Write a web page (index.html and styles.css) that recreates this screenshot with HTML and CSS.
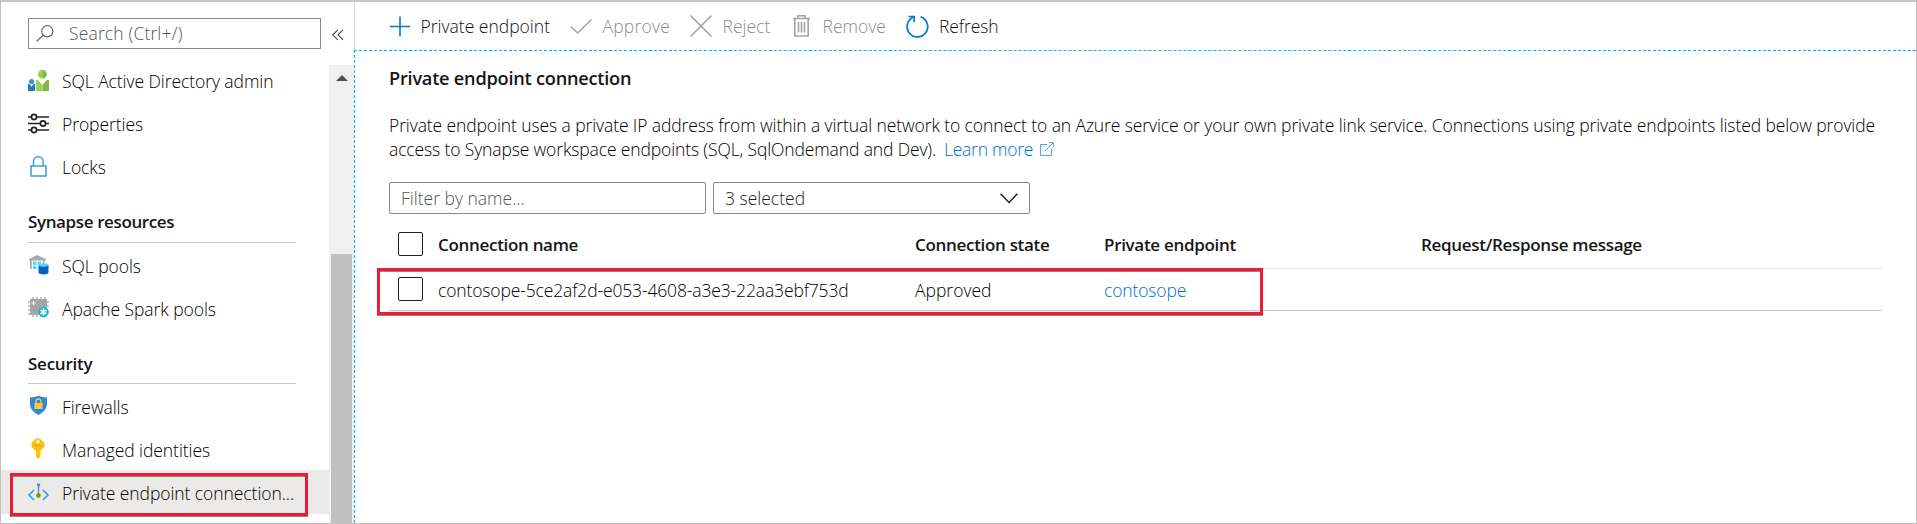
FILE: index.html
```html
<!DOCTYPE html>
<html lang="en">
<head>
<meta charset="utf-8">
<title>Private endpoint connections</title>
<link rel="stylesheet" href="styles.css">
</head>
<body>
<div class="portal">
  <aside class="sidebar">
    <div class="search-row">
      <div class="search">
        <svg class="search-icon" width="18" height="17" viewBox="0 0 18 17"><circle cx="11.3" cy="6.3" r="5.6"/><path d="M7.3 10.3L.6 16.2"/></svg>
        <span class="t t-search">Search (Ctrl+/)</span>
      </div>
      <svg class="collapse" width="12" height="12" viewBox="0 0 12 12"><path d="M5.8.8L.8 5.8l5 5M11 .8L6 5.8l5 5"/></svg>
    </div>
    <div class="nav-area">
      <nav class="nav">
        <a class="item"><svg class="icon" viewBox="0 0 21 21"><path fill="#2a76bd" d="M0 14h1.5l2 2.500 2-2.500H7v7H0z"/><circle cx="3.600" cy="11.500" r="2.600" fill="#3a8fd6"/><path fill="#fff" d="M2.300 14h2.600L3.600 17z"/><path fill="#9bd05c" d="M8 10h2l4.500 5V21H8z"/><path fill="#7fba42" d="M21 10h-2l-4.500 5V21H21z"/><circle cx="14.500" cy="4.300" r="4.300" fill="#7fba42"/><path fill="#9bd05c" d="M14.500 0a4.300 4.300 0 0 0 0 8.600z"/></svg><span class="t">SQL Active Directory admin</span></a>
        <a class="item"><svg class="icon line-dark" viewBox="0 0 21 21"><path d="M0 4h3M9 4h12M0 10.500h12M18 10.500h3M0 17h3M9 17h12"/><circle cx="6" cy="4" r="2.600"/><circle cx="15" cy="10.500" r="2.600"/><circle cx="6" cy="17" r="2.600"/></svg><span class="t">Properties</span></a>
        <a class="item"><svg class="icon line-blue" viewBox="0 0 21 21"><path d="M3 10h15v10H3zM5.500 10V5.500a4.800 4.800 0 0 1 9.600 0V10"/></svg><span class="t t-locks">Locks</span></a>
        <h2 class="group group-first"><span class="t t-syn">Synapse resources</span></h2>
        <a class="item"><svg class="icon icon-up" viewBox="0 0 21 21"><path fill="#a9a9a9" d="M9 1l9 4v1.500H1V5zM2 6h1.800v9H2zM15 6h1.500v4H15z"/><path fill="#50d8f5" d="M5 7.500h3.500V11H5zM9.500 7.500H13V11H9.500zM5 12h3.500v3H5z"/><path fill="#0063b8" d="M10.500 11h10v7.500c0 2.600-10 2.600-10 0z"/><ellipse cx="15.500" cy="11" rx="5" ry="1.700" fill="#50d8f5"/></svg><span class="t">SQL pools</span></a>
        <a class="item"><svg class="icon icon-up" viewBox="0 0 21 21"><path stroke="#b5b5b5" stroke-width="1.500" d="M5 0v20M9 0v20M13 0v20M17 0v12M0 5h21M0 9h21M0 13h12M0 17h12"/><rect x="2" y="2" width="17" height="16" rx="1" fill="#a5a5a5"/><path stroke="#fff" d="M5.500 4v4M3.500 6h4"/><circle cx="15.500" cy="15" r="5.300" fill="#20b4dd"/><path stroke="#fff" stroke-width="1.500" d="M15.500 11.500v7M12.500 13.200l6 3.600M18.500 13.200l-6 3.600"/></svg><span class="t">Apache Spark pools</span></a>
        <h2 class="group"><span class="t t-sec">Security</span></h2>
        <a class="item"><svg class="icon icon-up" viewBox="0 0 21 21"><path fill="#2f86e0" d="M10.500.500C13 2.500 16 2 19 2.500V9c0 5-4 8.500-8.500 11C6 17.500 2 14 2 9V2.500c3-.500 6 0 8.500-2z"/><path fill="#ffca2c" d="M6.500 8h8v6h-8z"/><path fill="none" stroke="#ffca2c" stroke-width="1.300" d="M8 8V6.500a2.500 2.500 0 0 1 5 0V8"/></svg><span class="t t-fire">Firewalls</span></a>
        <a class="item"><svg class="icon icon-up" viewBox="0 0 21 21"><path fill="#ffc20e" fill-rule="evenodd" d="M10 0l3 1.200L16.500 5v4L12.500 13v6L10 20.500 8 19v-6L3.500 9V5L7 1.200zM10 2a1.600 1.600 0 1 0 .010 0z"/><path stroke="#f39b13" stroke-width="1.200" d="M6.500 7.500h7"/></svg><span class="t">Managed identities</span></a>
        <a class="item selected"><svg class="icon" viewBox="0 0 21 21"><path fill="none" stroke="#3b9fd0" stroke-width="1.700" d="M6 7l-5 5 5 5M15 7l5 5-5 5"/><path stroke="#6b7f8c" stroke-width="1.300" d="M10.500 2v10"/><circle cx="10.500" cy="2" r="1.800" fill="#3b9fd0"/><circle cx="10.500" cy="12.500" r="2.300" fill="#57a300"/></svg><span class="t">Private endpoint connection...</span></a>
      </nav>
      <div class="scrollbar"><span class="arrow"></span><span class="thumb"></span></div>
    </div>
    <span class="mark mark-nav"></span>
  </aside>
  <main class="main">
    <div class="toolbar">
      <a class="cmd c1"><svg width="20" height="21" viewBox="0 0 20 21"><path stroke="#0078d4" stroke-width="1.600" d="M0 10.500h20M10 .500v20"/></svg><span class="t">Private endpoint</span></a>
      <a class="cmd c2 off"><svg width="22" height="21" viewBox="0 0 22 21"><path d="M.700 10.500l7 6.500L21.500 3.500"/></svg><span class="t t-app">Approve</span></a>
      <a class="cmd c3 off"><svg width="22" height="22" viewBox="0 0 22 22"><path d="M.500.500l21 21M21.500.500l-21 21"/></svg><span class="t">Reject</span></a>
      <a class="cmd c4 off"><svg width="17" height="22" viewBox="0 0 17 22"><path d="M0 3.500h17M5 3V.800h7V3M1.800 4v17h13.400V4M5.500 7v10.500M8.500 7v10.500M11.500 7v10.500"/></svg><span class="t">Remove</span></a>
      <a class="cmd c5"><svg width="23" height="23" viewBox="0 0 23 23"><path fill="none" stroke="#0078d4" stroke-width="1.700" d="M14.500 1.800A10.300 10.300 0 1 1 7.700 2M2.500 1.500h5.700v5.700"/></svg><span class="t t-ref">Refresh</span></a>
    </div>
    <section class="content">
      <h1 class="title"><span class="t t-title">Private endpoint connection</span></h1>
      <div class="para">
        <div class="para-line"><span class="t t-p1">Private endpoint uses a private IP address from within a virtual network to connect to an Azure service or your own private link service. Connections using private endpoints listed below provide</span></div>
        <div class="para-line"><span class="t t-p2">access to Synapse workspace endpoints (SQL, SqlOndemand and Dev).</span><a class="link more"><span class="t t-more">Learn more</span><svg width="14" height="14" viewBox="0 0 14 14"><path d="M7 2.500H.600v10.900h10.900V7M4.500 9.500l9-9M9 .600h4.400V5"/></svg></a></div>
      </div>
      <div class="filters">
        <div class="field"><span class="t t-filter">Filter by name...</span></div>
        <div class="field select"><span class="t t-3sel">3 selected</span><svg width="18" height="11" viewBox="0 0 18 11"><path d="M.600.800L9 9.500 17.400.800"/></svg></div>
      </div>
      <div class="table">
        <div class="row head"><span class="box"></span><span class="t">Connection name</span><span class="t">Connection state</span><span class="t">Private endpoint</span><span class="t">Request/Response message</span></div>
        <div class="row data"><span class="box"></span><span class="t t-id">contosope-5ce2af2d-e053-4608-a3e3-22aa3ebf753d</span><span class="t t-appd">Approved</span><a class="t t-cont link">contosope</a><span class="mark mark-row"></span></div>
      </div>
    </section>
  </main>
</div>
</body>
</html>
```
FILE: styles.css
```css
* { box-sizing: border-box; }
body { margin: 0; font-family: "Open Sans", "Noto Sans", sans-serif; font-size: 17.5px; font-weight: 300; color: #000; background: #fff; }
h1, h2 { margin: 0; font-weight: 600; font-size: 17px; letter-spacing: -0.38px; color: #161616; }
.portal { display: flex; width: 1917px; height: 524px; overflow: hidden; border: 1px solid #c0c0c0; border-top: 2px solid #c8c8c8; }
.t { white-space: nowrap; }
.icon { width: 21px; height: 21px; flex: none; overflow: visible; }
.icon-up { margin-bottom: 2px; }
.line-dark { fill: none; stroke: #222; stroke-width: 1.7; }
.line-blue { fill: none; stroke: #3b9fd0; stroke-width: 1.5; }

/* Sidebar */
.sidebar { position: relative; width: 353px; flex: none; display: flex; flex-direction: column; }
.search-row { display: flex; align-items: center; gap: 11px; height: 31px; margin: 16px 0 0 27px; }
.search { display: flex; align-items: center; gap: 15px; width: 293px; height: 31px; padding: 0 0 1px 7px; border: 1px solid #8a8886; color: #555; letter-spacing: 0.15px; }
.search-icon { fill: none; stroke: #666; stroke-width: 1.2; }
.collapse { fill: none; stroke: #444; stroke-width: 1.1; margin-top: 3px; }
.nav-area { display: flex; flex: 1; min-height: 0; margin-top: 16px; }
.nav { width: 328px; padding-top: 1px; margin-top: -7px; }
.item { display: flex; align-items: center; gap: 13px; height: 43px; padding: 0 0 0 27px; letter-spacing: -0.07px; }
.item.selected { height: 44px; background: #ebeae9; margin-top: -1px; padding-top: 2px; }
.group { display: flex; align-items: center; width: 268px; height: 54px; margin: 0 0 1px 27px; padding-top: 13px; border-bottom: 1px solid #c8c8c8; }
.group-first { height: 55px; }
.t-sec { letter-spacing: -0.25px; }
.scrollbar { width: 25px; background: #f0f0f0; display: flex; flex-direction: column; align-items: center; }
.arrow { margin-top: 10px; border: 6px solid transparent; border-top: 0; border-bottom-color: #505050; }
.thumb { margin-top: 173px; width: 21px; flex: 1; background: #c1c1c1; }
.mark { position: absolute; border: 3px solid #ef1a35; box-shadow: 0 1px 0 #888, inset 0 1px 0 #888; }
.mark-nav { left: 9px; top: 471px; width: 298px; height: 43px; }

/* Command bar */
.main { flex: 1; min-width: 0; display: flex; flex-direction: column; }
.toolbar { display: flex; height: 48px; padding-left: 35px; border-left: 1px solid #d2d2d2; align-items: center; }
.cmd { display: flex; align-items: center; gap: 10.5px; color: #111; }
.cmd svg { flex: none; overflow: visible; }
.c1 { width: 180px; }
.c2 { width: 120px; letter-spacing: 0.2px; }
.c3 { width: 103px; }
.c4 { width: 113px; gap: 12.5px; }
.c5 { gap: 10px; letter-spacing: -0.1px; }
.cmd.off { color: #8c8c8c; }
.off svg { fill: none; stroke: #a3a3a3; stroke-width: 1.6; }

/* Content */
.content { flex: 1; border-top: 1px dashed #00b7f1; border-left: 1px dashed #00b7f1; padding-left: 34px; }
.title { height: 54px; line-height: 54px; font-size: 18.2px; letter-spacing: -0.24px; }
.para { padding-top: 9px; letter-spacing: -0.104px; }
.para-line { display: flex; height: 23.5px; line-height: 23.5px; }
.t-p2 { letter-spacing: -0.13px; }
.link { color: #0070cc; }
.more { display: flex; align-items: center; gap: 7px; margin-left: 8px; letter-spacing: -0.25px; }
.more svg { fill: none; stroke: #4a9fd8; stroke-width: 1; }
.filters { display: flex; gap: 7px; margin-top: 21px; }
.field { display: flex; align-items: center; justify-content: space-between; width: 317px; height: 32px; border: 1px solid #8a8886; border-radius: 2px; padding: 0 11px 1px; color: #555; }
.select { color: #222; padding-bottom: 0; }
.select svg { fill: none; stroke: #222; stroke-width: 1.5; }
.table { width: 1493px; margin-top: 9px; }
.row { position: relative; display: grid; grid-template-columns: 40px 477px 189px 317px 1fr; align-items: center; padding-left: 9px; }
.head { height: 46px; padding-bottom: 3px; font-size: 17px; font-weight: 600; letter-spacing: -0.31px; color: #161616; border-bottom: 1px solid #eaeaea; }
.data { height: 42px; padding-bottom: 1px; letter-spacing: -0.14px; border-bottom: 1px solid #c8c8c8; }
.data .t { padding-top: 2px; }
.data .t-appd { letter-spacing: 0; }
.box { width: 25px; height: 24px; border: 1px solid #222; border-radius: 2px; }
.mark-row { left: -12px; top: -1px; width: 886px; height: 47px; }
```
